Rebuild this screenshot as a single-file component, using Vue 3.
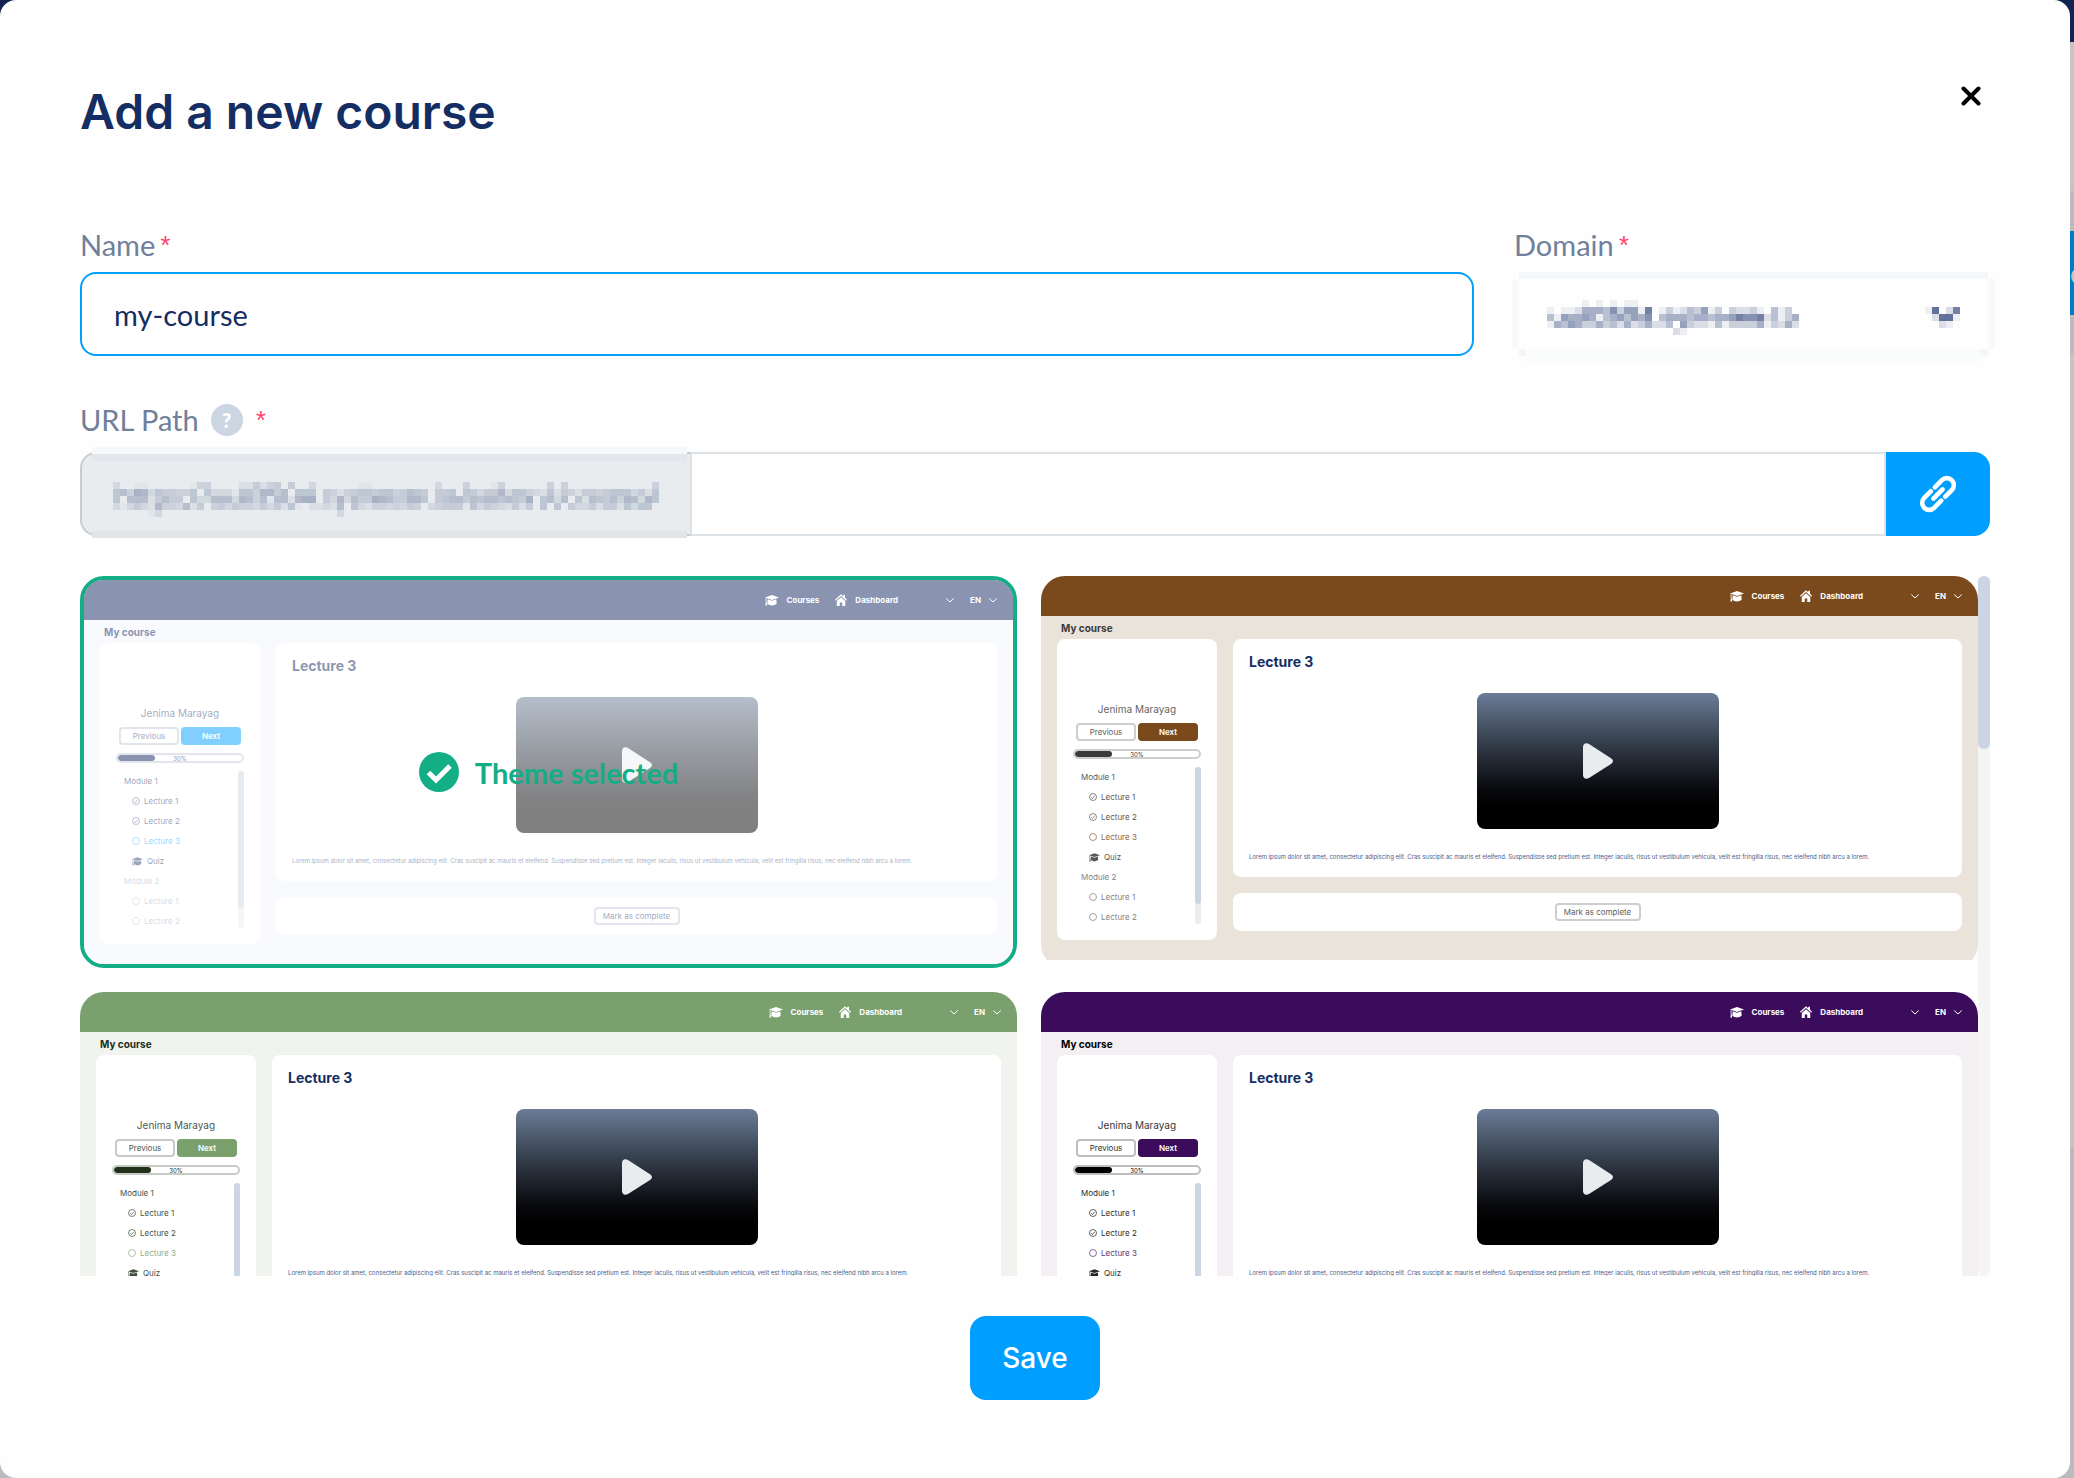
<script setup>
import { ref, computed } from 'vue'

const name = ref('my-course')
const path = ref('')
const domain = ref('')
const selected = ref('default')

const themes = [
  { id: 'default', header: '#142963', bg: '#f1f4fc', text: '#142963', accent: '#009fff', later: 0.35 },
  { id: 'brown', header: '#7b4a1c', bg: '#eae3da', text: '#3b3b3b', accent: '#7b4a1c', later: 0.65 },
  { id: 'green', header: '#7aa06e', bg: '#f0f3ee', text: '#20301b', accent: '#7aa06e', later: 0.65 },
  { id: 'purple', header: '#3a0c5b', bg: '#f3eff3', text: '#000000', accent: '#3a0c5b', later: 0.65 },
]

const lessons = [
  { label: 'Module 1', kind: 'module' },
  { label: 'Lecture 1', kind: 'done' },
  { label: 'Lecture 2', kind: 'done' },
  { label: 'Lecture 3', kind: 'open', current: true },
  { label: 'Quiz', kind: 'quiz' },
  { label: 'Module 2', kind: 'module', later: true },
  { label: 'Lecture 1', kind: 'open', later: true },
  { label: 'Lecture 2', kind: 'open', later: true },
]

const themeVars = (t) => ({
  '--header': t.header,
  '--bg': t.bg,
  '--text': t.text,
  '--accent': t.accent,
  '--later': t.later,
})

/* Pixelated masks: every digit is the strength of one 7px block. */
const CELL = 7
const toCells = (rows, firstCol, firstRow) =>
  rows.flatMap((row, r) =>
    [...row].flatMap((d, c) =>
      d === '0' ? [] : [{ x: (c + firstCol) * CELL, y: (r + firstRow) * CELL, o: Number(d) / 9 }],
    ),
  )

const domainCells = computed(() => [
  ...toCells(
    [
      '000001010101100000000000000000000000',
      '101125554736618013124361303223104130',
      '416556514564657045554554556877824135',
      '154653353425235224063221413333513252',
      '000000000000000000210000000000000000',
    ],
    5,
    4,
  ),
  ...toCells(['19028', '02991', '00210'], 59, 5),
])

const urlCells = computed(() =>
  toCells(
    [
      '300110000001440000225245050030000001100000000030004000140000004040000000000004',
      '674983655446063331664885706660542456656645765055606535583664326254255456663526',
      '607772575506337773874717728990538375598755886056775767767659067370627657487386',
      '313532844372504535443535261022327063244343540345551635432525060605335255263660',
      '000001300000000000000000000000003000000000000000000000000000000000000000000000',
    ],
    3,
    5,
  ),
)
</script>

<template>
  <div class="page">
    <main class="modal" role="dialog" aria-labelledby="dialog-title">
      <header class="modal-head">
        <h1 id="dialog-title">Add a new course</h1>
        <button class="close" type="button" aria-label="Close">
          <svg viewBox="0 0 20 20" width="20" height="20">
            <path d="M2.5 2.5 17.5 17.5M17.5 2.5 2.5 17.5" fill="none" stroke="#000" stroke-width="4" stroke-linecap="round" />
          </svg>
        </button>
      </header>

      <form @submit.prevent>
        <div class="row">
          <div class="field grow">
            <div class="caption">
              <label for="course-name">Name</label><span class="req">*</span>
            </div>
            <input id="course-name" v-model="name" class="text-input focused" type="text" />
          </div>
          <div class="field domain">
            <div class="caption">
              <label for="course-domain">Domain</label><span class="req">*</span>
            </div>
            <div class="select-wrap">
              <select id="course-domain" v-model="domain">
                <option value=""></option>
              </select>
              <svg class="mask domain-mask" width="483" height="91" viewBox="0 0 483 91" shape-rendering="crispEdges" aria-hidden="true">
                <rect x="7" y="0" width="469" height="7" fill="#f6f7f9" />
                <rect x="0" y="7" width="7" height="70" fill="#f7f9fa" />
                <rect x="476" y="7" width="7" height="70" fill="#f7f9fa" />
                <rect x="7" y="77" width="469" height="7" fill="#f4f5f8" />
                <rect x="14" y="77" width="455" height="14" fill="#fbfcfc" />
                <rect v-for="(b, i) in domainCells" :key="i" :x="b.x" :y="b.y" width="7" height="7" fill="#62729a" :fill-opacity="b.o" />
              </svg>
            </div>
          </div>
        </div>

        <div class="field url">
          <div class="caption tight">
            <label for="course-path">URL Path</label>
            <button class="help" type="button" aria-label="Help">?</button>
            <span class="req">*</span>
          </div>
          <div class="group">
            <div class="prefix">
              <svg class="mask url-mask" width="595" height="91" viewBox="0 0 595 91" shape-rendering="crispEdges" aria-hidden="true">
                <rect x="0" y="0" width="595" height="7" fill="#f6f7f8" />
                <rect x="0" y="7" width="595" height="7" fill="#e3e6ea" />
                <rect x="0" y="84" width="595" height="7" fill="#e1e5e8" />
                <rect v-for="(b, i) in urlCells" :key="i" :x="b.x" :y="b.y" width="7" height="7" fill="#a8b2c4" :fill-opacity="b.o" />
              </svg>
            </div>
            <input id="course-path" v-model="path" class="path-input" type="text" />
            <button class="link-btn" type="button" aria-label="Copy link">
              <svg viewBox="0 0 38 38" width="38" height="38">
                <g transform="translate(19 19) rotate(-45)" fill="none" stroke="#fff" stroke-width="4.6" stroke-linecap="round">
                  <path d="M3.5-7H13.5a7 7 0 0 1 0 14H4.2" transform="translate(-1 0)" />
                  <path d="M-3.5 7H-13.5a7 7 0 0 1 0-14H-4.2" transform="translate(1 0)" />
                  <path d="M-6.5 0H6.5" />
                </g>
              </svg>
            </button>
          </div>
        </div>

        <div class="themes">
          <div class="theme-grid">
            <article v-for="t in themes" :key="t.id" class="theme" :class="{ chosen: t.id === selected }" :style="themeVars(t)">
              <div class="preview">
                <nav class="p-head">
                  <a href="#">
                    <svg viewBox="0 0 28 22" width="14" height="11" fill="currentColor">
                      <path d="M14 0 28 5 14 10 0 5Z" />
                      <path d="M5.500 8.500 14 11.500 22.500 8.500 23.500 17c-4 5-15 5-19 0Z" />
                      <path d="M1.200 6.500H3L3.200 14 4.500 21H.8L1.500 14Z" />
                    </svg>
                    Courses
                  </a>
                  <a href="#">
                    <svg viewBox="0 0 24 24" width="12" height="12" fill="currentColor">
                      <path d="M12 .500 16.500 4.500V1.500H20v6L24 11.500 22.500 13.300 12 3.800 1.500 13.300 0 11.500Z" />
                      <path d="M12 6.500 20.500 14V24H14.500V17H9.500V24H3.500V14Z" />
                    </svg>
                    Dashboard
                  </a>
                  <span class="lang">
                    <svg class="chev" viewBox="0 0 16 10" width="8" height="5"><path d="M.500 1 8 8 15.500 1" /></svg>
                    EN
                    <svg class="chev" viewBox="0 0 16 10" width="8" height="5"><path d="M.500 1 8 8 15.500 1" /></svg>
                  </span>
                </nav>
                <div class="p-title">My course</div>
                <div class="p-body">
                  <aside class="panel side">
                    <div class="student">Jenima Marayag</div>
                    <div class="pair">
                      <button type="button" class="mini outline">Previous</button>
                      <button type="button" class="mini solid">Next</button>
                    </div>
                    <div class="progress"><span class="fill"></span><span class="pct">30%</span></div>
                    <div class="outline-box">
                      <ul>
                        <li v-for="(l, i) in lessons" :key="i" :class="[l.kind, { current: l.current, later: l.later }]">
                          <svg v-if="l.kind === 'quiz'" viewBox="0 0 28 22" width="11" height="9" fill="currentColor">
                            <path d="M14 0 28 5 14 10 0 5Z" />
                            <path d="M5.500 8.500 14 11.500 22.500 8.500 23.500 17c-4 5-15 5-19 0Z" />
                            <path d="M1.200 6.500H3L3.200 14 4.500 21H.8L1.500 14Z" />
                          </svg>
                          <svg v-else-if="l.kind !== 'module'" viewBox="0 0 16 16" width="8" height="8" fill="none" stroke="currentColor" stroke-width="1.400">
                            <circle cx="8" cy="8" r="7" />
                            <path v-if="l.kind === 'done'" d="M4.500 8.500 7 11 11.500 5.500" />
                          </svg>
                          {{ l.label }}
                        </li>
                      </ul>
                      <div class="mini-track"><div class="mini-thumb"></div></div>
                    </div>
                  </aside>
                  <div class="main-col">
                    <section class="panel lecture">
                      <h2>Lecture 3</h2>
                      <div class="video">
                        <svg viewBox="0 0 30 36" width="30" height="36" fill="#e9ecef">
                          <path d="M0 4C0 .5 3-.8 6 1L28 15.200c2.600 1.700 2.600 4 0 5.700L6 35C3 36.800 0 35.500 0 32Z" />
                        </svg>
                      </div>
                      <p>Lorem ipsum dolor sit amet, consectetur adipiscing elit. Cras suscipit ac mauris et eleifend. Suspendisse sed pretium est. Integer iaculis, risus ut vestibulum vehicula, velit est fringilla risus, nec eleifend nibh arcu a lorem.</p>
                    </section>
                    <section class="panel complete">
                      <button type="button" class="mini outline wide">Mark as complete</button>
                    </section>
                  </div>
                </div>
              </div>
              <input v-model="selected" class="pick" type="radio" name="theme" :value="t.id" :aria-label="'Theme ' + t.id" />
              <div v-if="t.id === selected" class="veil">
                <svg viewBox="0 0 40 40" width="40" height="40">
                  <circle cx="20" cy="20" r="20" fill="#13ae85" />
                  <path d="M9.500 20.500 17 28 31 14" fill="none" stroke="#fff" stroke-width="5" />
                </svg>
                <span>Theme selected</span>
              </div>
            </article>
          </div>
          <div class="track"><div class="thumb"></div></div>
        </div>

        <div class="actions">
          <button class="save" type="submit">Save</button>
        </div>
      </form>
    </main>
    <div class="edge"><div class="edge-btn">e</div></div>
  </div>
</template>

<style>
body {
  margin: 0;
  background: #bbbbbf;
}
</style>

<style scoped>
* {
  box-sizing: border-box;
}
.page {
  display: flex;
  min-height: 100vh;
  overflow: hidden;
  font-family: Lato, "Open Sans", sans-serif;
  background: linear-gradient(#12234f 0 42px, #c5c5c5 42px 191px, #bbbbbf 191px 354px, #c4c4c4 354px 1147px, #babbbf 1147px);
}
.modal {
  flex: 1;
  min-width: 0;
  padding: 80px 80px 78px;
  border-radius: 16px;
  background: #fefefe;
}
.edge {
  width: 4px;
  padding-top: 231px;
  overflow: hidden;
}
.edge-btn {
  height: 84px;
  line-height: 84px;
  font-size: 28px;
  background: #007cc4;
  color: #c5c5c5;
}
.modal-head {
  display: flex;
  justify-content: space-between;
  align-items: flex-start;
  margin-bottom: 80px;
}
h1 {
  margin: 0;
  font: 600 48px/64px Inter, sans-serif;
  color: #142d63;
}
button {
  border: 0;
  cursor: pointer;
}
.close {
  display: flex;
  padding: 6px 9px;
  background: none;
}
.row {
  display: flex;
  gap: 40px;
}
.grow {
  flex: 1;
}
.domain {
  width: 476px;
}
.caption {
  display: flex;
  height: 48px;
  line-height: 42px;
  font-size: 29px;
  color: #70809b;
}
.req {
  margin-left: 4px;
  font: italic 26px/42px "Liberation Sans", Arial, sans-serif;
  color: #ff4570;
}
.caption.tight {
  line-height: 32px;
}
.tight .req {
  line-height: 32px;
  margin-left: 12px;
}
.help {
  width: 32px;
  height: 32px;
  margin-left: 12px;
  padding: 0;
  border-radius: 50%;
  background: #ccd6e3;
  color: #fff;
  font: 900 20px/32px Lato, sans-serif;
}
.text-input {
  display: block;
  width: 100%;
  height: 84px;
  padding: 2px 32px;
  border: 2px solid #dde2e6;
  border-radius: 16px;
  outline: 0;
  background: #fff;
  font: 29px Lato, sans-serif;
  color: #142d63;
}
.text-input.focused {
  border-color: #049ffd;
}
.select-wrap {
  position: relative;
  height: 84px;
}
select {
  appearance: none;
  width: 100%;
  height: 84px;
  border: 0;
  background: transparent;
}
.mask {
  position: absolute;
  pointer-events: none;
}
.domain-mask {
  left: -2px;
  top: 0;
}
.url {
  margin-top: 48px;
}
.group {
  display: flex;
  height: 84px;
}
.prefix {
  position: relative;
  width: 612px;
  border: 2px solid #c5ccd3;
  border-right-color: #dde2e6;
  border-radius: 16px 0 0 16px;
  background: #e8ecef;
}
.url-mask {
  left: 10px;
  top: -7px;
}
.path-input {
  flex: 1;
  min-width: 0;
  padding: 0 32px;
  border: 2px solid #dde2e6;
  border-left: 0;
  outline: 0;
  background: #fff;
  font: 29px Lato, sans-serif;
  color: #142d63;
}
.link-btn {
  display: flex;
  align-items: center;
  justify-content: center;
  width: 104px;
  border-radius: 0 16px 16px 0;
  background: #009fff;
}
.themes {
  display: flex;
  margin-top: 40px;
  max-height: 700px;
  overflow: hidden;
}
.theme-grid {
  flex: 1;
  display: grid;
  grid-template-columns: 1fr 1fr;
  grid-auto-rows: 392px;
  gap: 24px;
}
.track {
  width: 12px;
  border-radius: 6px;
  background: #f5f5f5;
}
.track {
  height: 700px;
}
.thumb {
  height: 173px;
  border-radius: 6px;
  background: #ccd6e3;
}
.theme {
  position: relative;
  overflow: hidden;
  border-radius: 24px;
}
.theme.chosen {
  border: 4px solid #13ae85;
}
.preview {
  height: 384px;
  background: var(--bg);
  color: var(--text);
  font-family: Inter, sans-serif;
  font-size: 8px;
}
.p-head {
  display: flex;
  align-items: center;
  justify-content: flex-end;
  gap: 16px;
  height: 40px;
  padding: 0 16px;
  background: var(--header);
  color: #fff;
  font-weight: 700;
}
.p-head a,
.lang {
  display: flex;
  align-items: center;
  gap: 8px;
  color: #fff;
  text-decoration: none;
}
.lang {
  margin-left: 32px;
}
.lang .chev:first-child {
  margin-right: 8px;
}
.chev {
  fill: none;
  stroke: currentColor;
  stroke-width: 2;
}
.p-title {
  height: 23px;
  padding-left: 20px;
  font-size: 10px;
  line-height: 24px;
  font-weight: 700;
}
.p-body {
  display: flex;
  align-items: flex-start;
  gap: 16px;
  padding: 0 16px;
}
.panel {
  border-radius: 8px;
  background: #fff;
}
.side {
  width: 160px;
  height: 301px;
  padding: 64px 16px 0;
}
.student {
  font-size: 10px;
  line-height: 12px;
  text-align: center;
  opacity: 0.8;
}
.pair {
  display: flex;
  justify-content: center;
  gap: 2px;
  margin-top: 8px;
}
.mini {
  width: 60px;
  height: 18px;
  padding: 0;
  border-radius: 4px;
  font: 8px/14px Inter, sans-serif;
  text-align: center;
}
.outline {
  border: 2px solid color-mix(in srgb, var(--text) 25%, #fff);
  background: #fff;
  color: color-mix(in srgb, var(--text) 80%, #fff);
}
.solid {
  background: var(--accent);
  color: #fff;
  font-weight: 600;
}
.wide {
  width: 86px;
}
.progress {
  position: relative;
  height: 10px;
  margin-top: 8px;
  border: 2px solid color-mix(in srgb, var(--text) 25%, #fff);
  border-radius: 5px;
  overflow: hidden;
}
.fill {
  display: block;
  width: 30%;
  height: 6px;
  border-radius: 3px;
  background: var(--text);
}
.pct {
  position: absolute;
  inset: 0;
  font-size: 6px;
  line-height: 8px;
  text-align: center;
}
.outline-box {
  display: flex;
  height: 157px;
  margin-top: 8px;
  overflow: hidden;
}
ul {
  flex: 1;
  margin: 0;
  padding: 0;
  list-style: none;
}
li {
  display: flex;
  align-items: center;
  gap: 4px;
  height: 20px;
  padding-left: 16px;
  opacity: 0.85;
}
li.module {
  padding-left: 8px;
}
li.current {
  color: var(--accent);
}
li.later {
  opacity: var(--later);
}
.mini-track {
  width: 6px;
  border-radius: 3px;
  background: #ededed;
}
.mini-thumb {
  height: 137px;
  border-radius: 3px;
  background: #ccd6e3;
}
.main-col {
  flex: 1;
  min-width: 0;
  display: flex;
  flex-direction: column;
  gap: 16px;
}
.lecture {
  height: 238px;
  padding: 14px 16px 0;
}
h2 {
  margin: 0;
  font-size: 14px;
  line-height: 18px;
  font-weight: 700;
  color: #142d63;
}
.video {
  display: flex;
  align-items: center;
  justify-content: center;
  width: 242px;
  height: 136px;
  margin: 22px auto 0;
  border-radius: 8px;
  background: linear-gradient(#6b7c98, #3b4654 32%, #20252f 52%, #07080b 72%, #000 85%);
}
.lecture p {
  margin: 22px 0 0;
  font-size: 6px;
  line-height: 12px;
  color: #4a5c88;
  white-space: nowrap;
}
.complete {
  display: flex;
  align-items: center;
  justify-content: center;
  height: 38px;
}
.pick {
  position: absolute;
  inset: 0;
  width: 100%;
  height: 100%;
  margin: 0;
  opacity: 0;
  cursor: pointer;
}
.veil {
  position: absolute;
  inset: 0;
  display: flex;
  align-items: center;
  justify-content: center;
  gap: 16px;
  background: rgba(255, 255, 255, 0.5);
  color: #13ae85;
  font-size: 29px;
  font-weight: 700;
  pointer-events: none;
}
.actions {
  display: flex;
  justify-content: center;
  margin-top: 40px;
}
.save {
  height: 84px;
  padding: 0 32px;
  border-radius: 16px;
  background: #009fff;
  color: #fff;
  font: 500 28px Inter, sans-serif;
}
</style>
